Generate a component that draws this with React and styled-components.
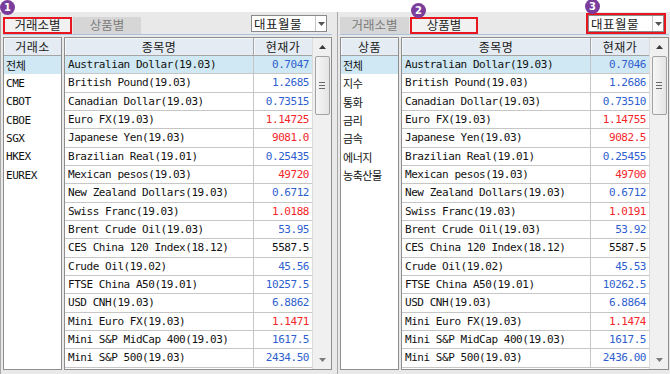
import React from 'react';
import styled, { createGlobalStyle } from 'styled-components';

const Global = createGlobalStyle`
  html, body { margin: 0; padding: 0; background: #ffffff; }
  body { font-family: "DejaVu Sans Mono", "Noto Sans CJK KR", monospace; }
  #root { width: 670px; height: 374px; }
`;

const BLUE = '#2f5fcf';
const RED = '#f4262a';

const Page = styled.div`
  display: grid;
  grid-template-columns: 337px 333px;
  width: 670px;
  height: 374px;
  background: #ffffff;
  overflow: hidden;
`;

const Panel = styled.section`
  position: relative;
  display: flex;
  flex-direction: column;
  padding-top: 12px;
  box-sizing: border-box;
  height: 374px;
`;

const Body = styled.div`
  flex: 1;
  display: flex;
  flex-direction: column;
  background: #e9e9e9;
  border-left: 1px solid #a9a9a9;
  padding: 0 0 4px 2px;
  box-sizing: border-box;
`;

const TabStrip = styled.div`
  height: 23px;
  width: 329px;
  box-sizing: border-box;
  display: flex;
  align-items: flex-end;
  gap: 1px;
  border-bottom: 1px solid #a9c3df;
`;

const Tab = styled.div`
  position: relative;
  width: ${p => p.$w}px;
  height: 17px;
  box-sizing: border-box;
  display: flex;
  align-items: center;
  justify-content: center;
  font-family: "Noto Sans CJK KR", sans-serif;
  font-size: 12.5px;
  line-height: 1;
  color: ${p => (p.$active ? '#1e1e1e' : '#7c7c7c')};
  background: ${p => (p.$active ? '#f1f1f1' : '#d6d6d6')};
  border: 2px solid ${p => (p.$highlight ? '#e8161e' : 'transparent')};
`;

const Combo = styled.div`
  position: relative;
  margin-left: auto;
  margin-right: 5px;
  margin-bottom: 2px;
  width: 76px;
  height: 17px;
  box-sizing: border-box;
  display: flex;
  background: #ffffff;
  border: 1px solid #8a8a8a;
  outline: ${p => (p.$highlight ? '2px solid #e8161e' : 'none')};
`;

const ComboText = styled.div`
  flex: 1;
  display: flex;
  align-items: center;
  padding-left: 2px;
  font-family: "Noto Sans CJK KR", sans-serif;
  font-size: 12.5px;
  letter-spacing: 0.5px;
  color: #1a1a1a;
`;

const ComboButton = styled.div`
  width: 10px;
  border-left: 1px solid #c4c4c4;
  display: flex;
  align-items: center;
  justify-content: center;
`;

const Badge = styled.div`
  position: absolute;
  left: ${p => p.$x}px;
  top: ${p => p.$y}px;
  width: 15px;
  height: 15px;
  border-radius: 50%;
  background: #7b3d9c;
  color: #ffffff;
  font-family: "DejaVu Sans", sans-serif;
  font-size: 10px;
  font-weight: bold;
  display: flex;
  align-items: center;
  justify-content: center;
  z-index: 2;
`;

const Content = styled.div`
  margin-top: 2px;
  width: 329px;
  height: 333px;
  display: flex;
  gap: 2px;
`;

const ListBox = styled.div`
  width: 60px;
  height: 100%;
  box-sizing: border-box;
  border: 1px solid #8e8e8e;
  background: #ffffff;
  display: flex;
  flex-direction: column;
`;

const HeadCell = styled.div`
  height: 18px;
  box-sizing: border-box;
  display: flex;
  align-items: center;
  justify-content: center;
  background: #e4ebf2;
  border-bottom: 1px solid #a4a4a4;
  border-right: ${p => (p.$divider ? '1px solid #a4a4a4' : 'none')};
  box-shadow: inset 1px 1px 0 #f6f9fc;
  font-family: "Noto Sans CJK KR", sans-serif;
  font-size: 12px;
  color: #1a1a1a;
  letter-spacing: 0.5px;
`;

const ListItem = styled.div`
  height: 18.33px;
  display: flex;
  align-items: center;
  padding-left: 2px;
  font-size: 11px;
  letter-spacing: -0.45px;
  color: #111111;
  background: ${p => (p.$selected ? '#cfe8f3' : 'transparent')};
`;

const Grid = styled.div`
  flex: 1;
  height: 100%;
  box-sizing: border-box;
  border: 1px solid #8e8e8e;
  background: #ffffff;
  display: flex;
`;

const Table = styled.div`
  width: 247px;
  display: flex;
  flex-direction: column;
`;

const Row = styled.div`
  display: grid;
  grid-template-columns: 189px 58px;
  height: ${p => (p.$head ? '18px' : '18.33px')};
  box-sizing: border-box;
  background: ${p => (p.$selected ? '#cfe8f3' : 'transparent')};
  border-bottom: ${p => (p.$head ? 'none' : '1px solid #c6c6c6')};
`;

const NameCell = styled.div`
  display: flex;
  align-items: center;
  padding-left: 3px;
  border-right: 1px solid #c6c6c6;
  font-size: 11px;
  letter-spacing: -0.45px;
  color: #111111;
  white-space: nowrap;
  overflow: hidden;
`;

const PriceCell = styled.div`
  display: flex;
  align-items: center;
  justify-content: flex-end;
  padding-right: 3px;
  font-size: 11px;
  letter-spacing: -0.45px;
  color: ${p => (p.$tone === 'r' ? RED : p.$tone === 'b' ? BLUE : '#111111')};
`;

const Scrollbar = styled.div`
  width: 18px;
  display: flex;
  flex-direction: column;
  align-items: center;
  background: #f0f0f0;
  border-left: 1px solid #dcdcdc;
`;

const ScrollArrow = styled.div`
  height: 18px;
  width: 100%;
  display: flex;
  align-items: center;
  justify-content: center;
`;

const Thumb = styled.div`
  width: 15px;
  height: 59px;
  box-sizing: border-box;
  border: 1px solid #a2a2a2;
  border-radius: 2px;
  background: linear-gradient(to right, #f6f6f6, #e4e4e4);
  display: flex;
  flex-direction: column;
  align-items: center;
  justify-content: center;
  gap: 2px;
`;

const Grip = styled.div`
  width: 6px;
  height: 1px;
  background: #6a6a6a;
`;

const Spacer = styled.div`
  flex: 1;
`;

const Triangle = ({ up, color = '#3a3a3a' }) => (
  <svg width="7" height="4" viewBox="0 0 7 4">
    {up ? <path d="M0 4 L3.5 0 L7 4 Z" fill={color} /> : <path d="M0 0 L7 0 L3.5 4 Z" fill={color} />}
  </svg>
);

const leftRows = [
  ['Australian Dollar(19.03)', '0.7047', 'b'],
  ['British Pound(19.03)', '1.2685', 'b'],
  ['Canadian Dollar(19.03)', '0.73515', 'b'],
  ['Euro FX(19.03)', '1.14725', 'r'],
  ['Japanese Yen(19.03)', '9081.0', 'r'],
  ['Brazilian Real(19.01)', '0.25435', 'b'],
  ['Mexican pesos(19.03)', '49720', 'r'],
  ['New Zealand Dollars(19.03)', '0.6712', 'b'],
  ['Swiss Franc(19.03)', '1.0188', 'r'],
  ['Brent Crude Oil(19.03)', '53.95', 'b'],
  ['CES China 120 Index(18.12)', '5587.5', 'k'],
  ['Crude Oil(19.02)', '45.56', 'b'],
  ['FTSE China A50(19.01)', '10257.5', 'b'],
  ['USD CNH(19.03)', '6.8862', 'b'],
  ['Mini Euro FX(19.03)', '1.1471', 'r'],
  ['Mini S&P MidCap 400(19.03)', '1617.5', 'b'],
  ['Mini S&P 500(19.03)', '2434.50', 'b'],
];

const rightRows = [
  ['Australian Dollar(19.03)', '0.7046', 'b'],
  ['British Pound(19.03)', '1.2686', 'b'],
  ['Canadian Dollar(19.03)', '0.73510', 'b'],
  ['Euro FX(19.03)', '1.14755', 'r'],
  ['Japanese Yen(19.03)', '9082.5', 'r'],
  ['Brazilian Real(19.01)', '0.25455', 'b'],
  ['Mexican pesos(19.03)', '49700', 'r'],
  ['New Zealand Dollars(19.03)', '0.6712', 'b'],
  ['Swiss Franc(19.03)', '1.0191', 'r'],
  ['Brent Crude Oil(19.03)', '53.92', 'b'],
  ['CES China 120 Index(18.12)', '5587.5', 'k'],
  ['Crude Oil(19.02)', '45.53', 'b'],
  ['FTSE China A50(19.01)', '10262.5', 'b'],
  ['USD CNH(19.03)', '6.8864', 'b'],
  ['Mini Euro FX(19.03)', '1.1474', 'r'],
  ['Mini S&P MidCap 400(19.03)', '1617.5', 'b'],
  ['Mini S&P 500(19.03)', '2436.00', 'b'],
];

const MarketPanel = ({ mode, listTitle, items, rows, badges }) => (
  <Panel>
    <Body>
      <TabStrip>
        <Tab $w={69} $active={mode === 0} $highlight={badges.tab === 0}>
          {badges.tab === 0 && <Badge $x={-5} $y={-19}>{badges.n}</Badge>}
          거래소별
        </Tab>
        <Tab $w={68} $active={mode === 1} $highlight={badges.tab === 1}>
          {badges.tab === 1 && <Badge $x={-1} $y={-16}>{badges.n}</Badge>}
          상품별
        </Tab>
        <Combo $highlight={!!badges.combo}>
          {badges.combo && <Badge $x={-4} $y={-17}>{badges.combo}</Badge>}
          <ComboText>대표월물</ComboText>
          <ComboButton>
            <Triangle color="#555" />
          </ComboButton>
        </Combo>
      </TabStrip>
      <Content>
        <ListBox>
          <HeadCell>{listTitle}</HeadCell>
          {items.map((it, i) => (
            <ListItem key={it} $selected={i === 0}>{it}</ListItem>
          ))}
        </ListBox>
        <Grid>
          <Table>
            <Row $head>
              <HeadCell $divider>종목명</HeadCell>
              <HeadCell>현재가</HeadCell>
            </Row>
            {rows.map(([name, price, tone], i) => (
              <Row key={name} $selected={i === 0}>
                <NameCell>{name}</NameCell>
                <PriceCell $tone={tone}>{price}</PriceCell>
              </Row>
            ))}
          </Table>
          <Scrollbar>
            <ScrollArrow><Triangle up /></ScrollArrow>
            <Thumb>
              <Grip />
              <Grip />
              <Grip />
            </Thumb>
            <Spacer />
            <ScrollArrow><Triangle color="#7a7a7a" /></ScrollArrow>
          </Scrollbar>
        </Grid>
      </Content>
    </Body>
  </Panel>
);

export default function App() {
  return (
    <>
      <Global />
      <Page>
        <MarketPanel
          mode={0}
          listTitle="거래소"
          items={['전체', 'CME', 'CBOT', 'CBOE', 'SGX', 'HKEX', 'EUREX']}
          rows={leftRows}
          badges={{ tab: 0, n: '1' }}
        />
        <MarketPanel
          mode={1}
          listTitle="상품"
          items={['전체', '지수', '통화', '금리', '금속', '에너지', '농축산물']}
          rows={rightRows}
          badges={{ tab: 1, n: '2', combo: '3' }}
        />
      </Page>
    </>
  );
}
